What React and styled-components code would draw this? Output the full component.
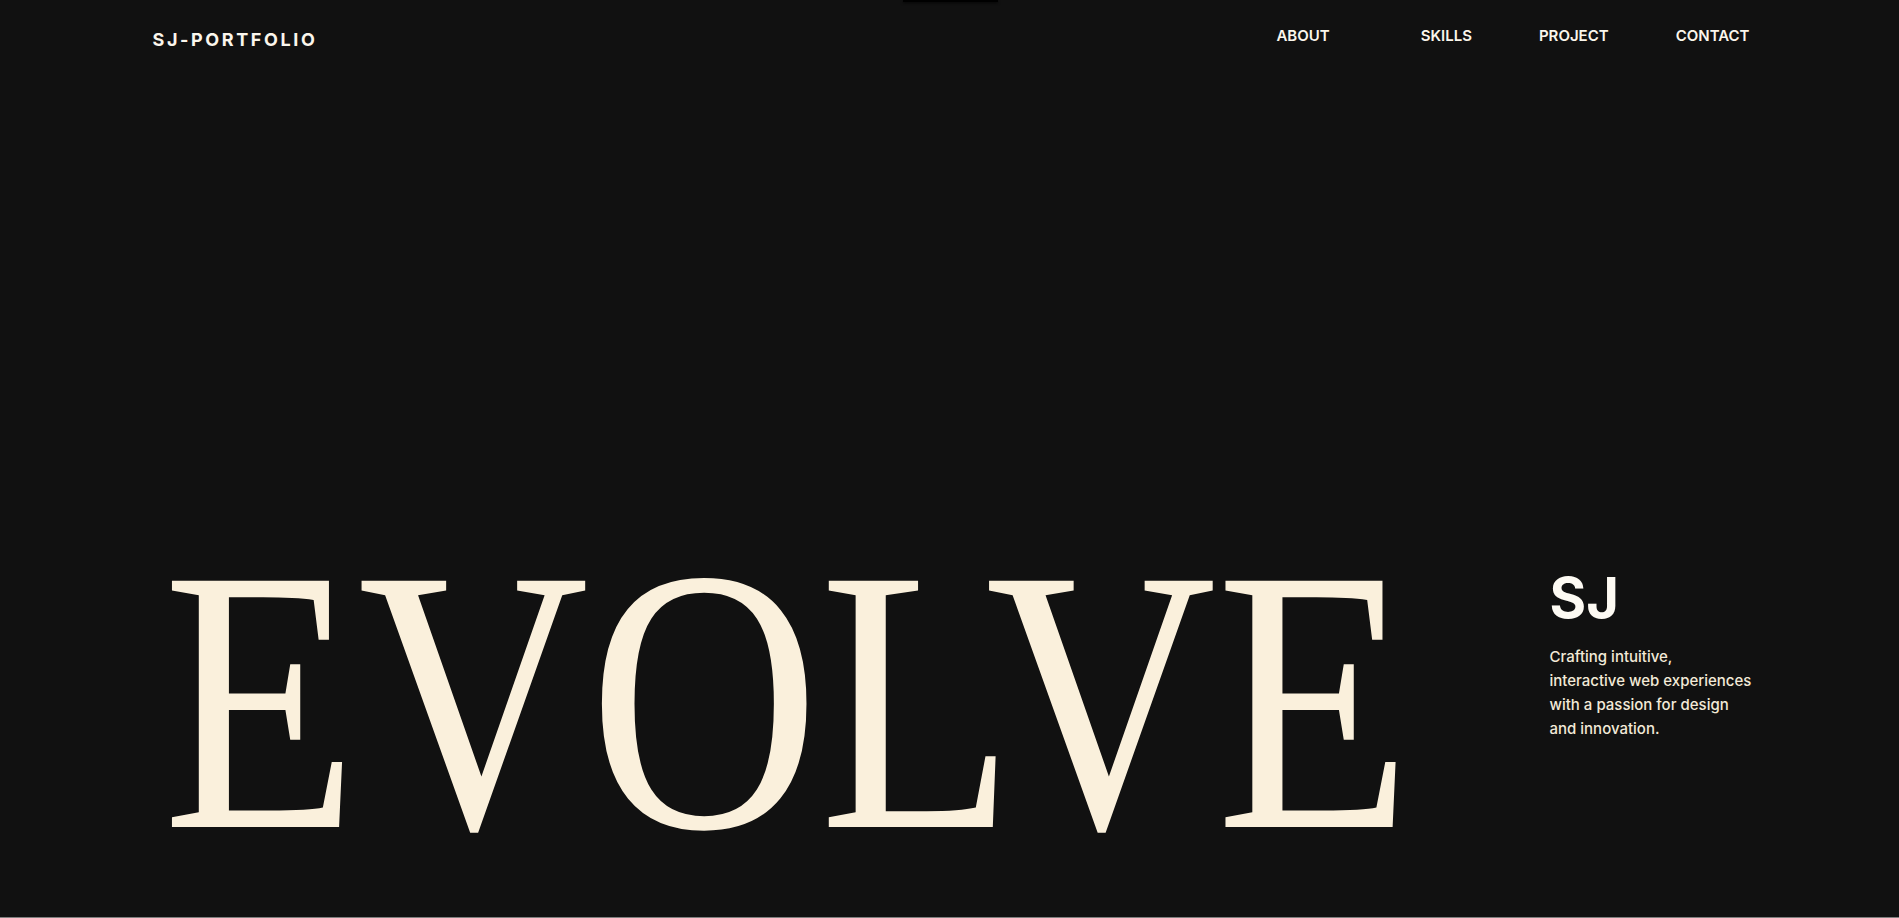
import React from "react";
import styled, { createGlobalStyle } from "styled-components";

const GlobalStyle = createGlobalStyle`
  * {
    box-sizing: border-box;
  }

  body {
    margin: 0;
    background: #7f7f7f;
    font-family: "Inter", "Liberation Sans", sans-serif;
    overflow: hidden;
  }
`;

const Hero = styled.section`
  position: relative;
  height: 917px;
  background: #111111;
  display: flex;
  flex-direction: column;
  justify-content: space-between;
`;

const TopTab = styled.div`
  position: absolute;
  top: 0;
  left: 903px;
  width: 95px;
  height: 2px;
  background: #000;
  box-shadow: 0 1px 3px rgba(0, 0, 0, 0.8);
`;

const Container = styled.div`
  width: 1600px;
  margin: 0 auto;
`;

const Header = styled(Container)`
  display: flex;
  justify-content: space-between;
  align-items: flex-start;
  padding-top: 25px;
`;

const Logo = styled.a`
  margin: 4px 0 0 3px;
  font-size: 18px;
  font-weight: 700;
  letter-spacing: 0.145em;
  color: #fbf6ec;
  text-decoration: none;
`;

const Nav = styled.nav`
  display: flex;
  align-items: center;
  gap: 67px;
  padding-top: 1px;
`;

const NavLink = styled.a`
  font-size: 15px;
  font-weight: 600;
  color: #fbf6ec;
  text-decoration: none;
  margin-right: ${(p) => (p.$wide ? "24px" : "0")};
`;

const Main = styled(Container)`
  display: flex;
  justify-content: space-between;
  align-items: flex-start;
  padding-bottom: 29px;
`;

const Title = styled.h1`
  flex: none;
  width: 1230px;
  margin: 0;
  padding-left: 15px;
  font-family: "Liberation Serif", "Times New Roman", serif;
  font-weight: 400;
  font-size: 376px;
  line-height: 1;
  color: #faf0dc;
  transform: scaleX(0.85);
  transform-origin: left center;
  white-space: nowrap;
`;

const Side = styled.div`
  flex: none;
  width: 200px;
  margin-top: 58px;
  display: flex;
  flex-direction: column;
  gap: 19px;
`;

const Initials = styled.h2`
  margin: 0;
  font-size: 56px;
  font-weight: 700;
  line-height: 1;
  color: #fdfaf3;
`;

const Tagline = styled.p`
  margin: 0;
  font-size: 15px;
  line-height: 24px;
  font-weight: 500;
  color: #f3ead8;
  white-space: nowrap;
`;

export default function App() {
  return (
    <>
      <GlobalStyle />
      <Hero>
        <TopTab />
        <Header as="header">
          <Logo href="#">SJ-PORTFOLIO</Logo>
          <Nav>
            <NavLink href="#about" $wide>ABOUT</NavLink>
            <NavLink href="#skills">SKILLS</NavLink>
            <NavLink href="#project">PROJECT</NavLink>
            <NavLink href="#contact">CONTACT</NavLink>
          </Nav>
        </Header>
        <Main>
          <Title>EVOLVE</Title>
          <Side>
            <Initials>SJ</Initials>
            <Tagline>
              Crafting intuitive,
              <br />
              interactive web experiences
              <br />
              with a passion for design
              <br />
              and innovation.
            </Tagline>
          </Side>
        </Main>
      </Hero>
    </>
  );
}
